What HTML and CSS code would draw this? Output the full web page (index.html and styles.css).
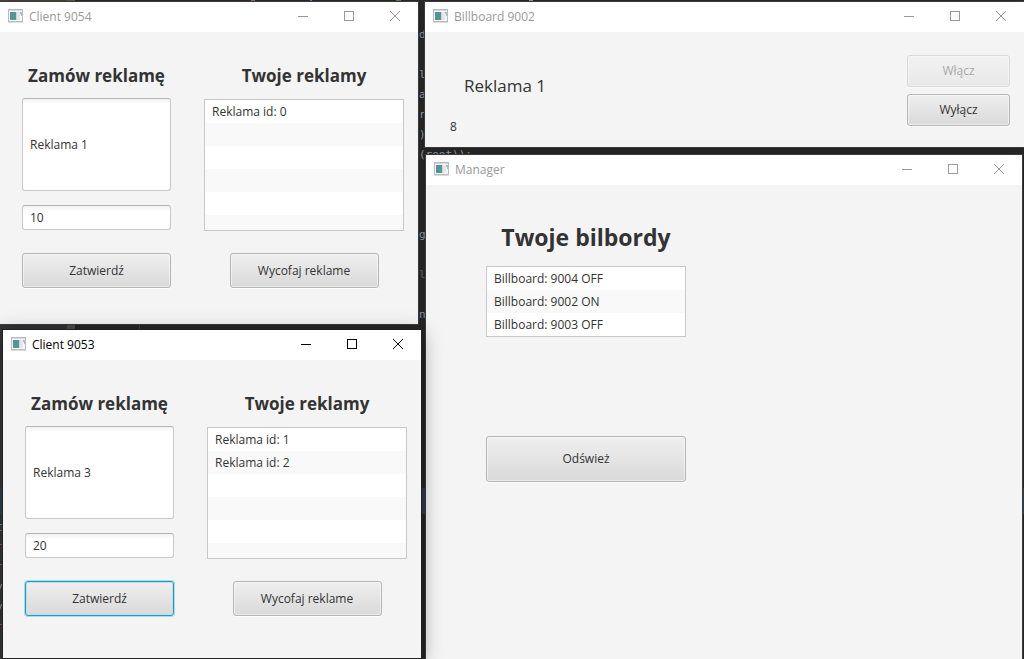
FILE: index.html
```html
<!DOCTYPE html>
<html lang="pl">
<head>
<meta charset="utf-8">
<title>Billboardy</title>
<link rel="stylesheet" href="styles.css">
</head>
<body>
<svg class="defs" width="0" height="0" aria-hidden="true">
  <defs>
    <linearGradient id="pane" x1="0" y1="0" x2="1" y2="1">
      <stop offset="0" stop-color="#5f86b0"/><stop offset="1" stop-color="#45a67a"/>
    </linearGradient>
    <symbol id="app" viewBox="0 0 16 14">
      <rect x="0.5" y="0.5" width="14" height="12" fill="#f8f8fa" stroke="#b8bcc2"/>
      <path d="M0 13.5h15.5" stroke="#dcdcdc"/>
      <path d="M1 1.5h13" stroke="#d5d8e2"/>
      <rect x="2" y="3" width="6" height="8" fill="url(#pane)"/>
      <rect x="8" y="3" width="1" height="8" fill="#cfd6da"/>
      <rect x="9" y="3" width="3" height="8" fill="#e6e6ea"/>
      <path d="M12 3h2v4h-1v-2h-1z" fill="#9cc4bd"/>
    </symbol>
    <symbol id="min" viewBox="0 0 10 10"><path d="M0 5.5h10" stroke="currentColor"/></symbol>
    <symbol id="max" viewBox="0 0 10 10"><rect x="0.5" y="0.5" width="9" height="9" fill="none" stroke="currentColor"/></symbol>
    <symbol id="close" viewBox="0 0 10 10"><path d="M0 0l10 10M10 0l-10 10" stroke="currentColor"/></symbol>
  </defs>
</svg>
<div class="desktop">
  <div class="editor" aria-hidden="true">
    <div class="tabs"></div>
    <div class="gutter"></div>
    <div class="selected-line"></div>
    <pre class="code code-main">d

l
a
r
)
(root))<span class="kw">;</span>



g

<span class="dim">l</span>

n</pre>
    <pre class="code code-side">□
<span class="err">r</span>
<span class="err">r</span>
y
y
<span class="err">r</span></pre>
  </div>

  <section class="window client-a">
    <header class="titlebar">
      <svg class="app-icon"><use href="#app"/></svg>
      <span class="title">Client 9054</span>
      <button class="ctl" aria-label="Minimalizuj"><svg><use href="#min"/></svg></button>
      <button class="ctl" aria-label="Maksymalizuj"><svg><use href="#max"/></svg></button>
      <button class="ctl" aria-label="Zamknij"><svg><use href="#close"/></svg></button>
    </header>
    <div class="client-body">
      <form class="order">
        <h2 class="heading" id="order-a">Zamów reklamę</h2>
        <input class="field message" type="text" value="Reklama 1" aria-labelledby="order-a">
        <input class="field" type="text" value="10" aria-label="Czas">
        <button class="btn" type="button">Zatwierdź</button>
      </form>
      <div class="ads">
        <h2 class="heading">Twoje reklamy</h2>
        <ul class="list list-ads"><li>Reklama id: 0</li></ul>
        <button class="btn" type="button">Wycofaj reklame</button>
      </div>
    </div>
  </section>

  <section class="window billboard">
    <header class="titlebar">
      <svg class="app-icon"><use href="#app"/></svg>
      <span class="title">Billboard 9002</span>
      <button class="ctl" aria-label="Minimalizuj"><svg><use href="#min"/></svg></button>
      <button class="ctl" aria-label="Maksymalizuj"><svg><use href="#max"/></svg></button>
      <button class="ctl" aria-label="Zamknij"><svg><use href="#close"/></svg></button>
    </header>
    <div class="billboard-body">
      <div class="display">
        <p class="advert">Reklama 1</p>
        <p class="counter">8</p>
      </div>
      <div class="switches">
        <button class="btn" type="button" disabled>Włącz</button>
        <button class="btn" type="button">Wyłącz</button>
      </div>
    </div>
  </section>

  <section class="window manager">
    <header class="titlebar">
      <svg class="app-icon"><use href="#app"/></svg>
      <span class="title">Manager</span>
      <button class="ctl" aria-label="Minimalizuj"><svg><use href="#min"/></svg></button>
      <button class="ctl" aria-label="Maksymalizuj"><svg><use href="#max"/></svg></button>
      <button class="ctl" aria-label="Zamknij"><svg><use href="#close"/></svg></button>
    </header>
    <div class="manager-body">
      <h1 class="heading-big">Twoje bilbordy</h1>
      <ul class="list"><li>Billboard: 9004 OFF</li><li>Billboard: 9002 ON</li><li>Billboard: 9003 OFF</li></ul>
      <button class="btn refresh" type="button">Odśwież</button>
    </div>
  </section>

  <section class="window client-b active">
    <header class="titlebar">
      <svg class="app-icon"><use href="#app"/></svg>
      <span class="title">Client 9053</span>
      <button class="ctl" aria-label="Minimalizuj"><svg><use href="#min"/></svg></button>
      <button class="ctl" aria-label="Maksymalizuj"><svg><use href="#max"/></svg></button>
      <button class="ctl" aria-label="Zamknij"><svg><use href="#close"/></svg></button>
    </header>
    <div class="client-body">
      <form class="order">
        <h2 class="heading" id="order-b">Zamów reklamę</h2>
        <input class="field message" type="text" value="Reklama 3" aria-labelledby="order-b">
        <input class="field" type="text" value="20" aria-label="Czas">
        <button class="btn focused" type="button">Zatwierdź</button>
      </form>
      <div class="ads">
        <h2 class="heading">Twoje reklamy</h2>
        <ul class="list list-ads"><li>Reklama id: 1</li><li>Reklama id: 2</li></ul>
        <button class="btn" type="button">Wycofaj reklame</button>
      </div>
    </div>
  </section>
</div>
</body>
</html>
```
FILE: styles.css
```css
* { box-sizing: border-box; }
body {
  margin: 0;
  font: 12px/16px "Open Sans", "Noto Sans", sans-serif;
  color: #333;
}
h1, h2, p, ul, pre { margin: 0; padding: 0; }
button, input { font: inherit; color: inherit; }
.defs { position: absolute; }

.desktop {
  position: relative;
  height: 100vh;
  overflow: hidden;
  background: #292929;
}

/* Editor behind the windows */
.code {
  position: absolute;
  font: 11px/20px "DejaVu Sans Mono", monospace;
  color: #93a0b0;
}
.code-main { left: 419px; top: 25px; }
.code-side { left: -4px; top: 517px; }
.kw { color: #cc7832; }
.dim { color: #666; }
.err { color: #c0504a; }
.tabs, .gutter, .selected-line { position: absolute; }
.tabs {
  top: 0;
  width: 100%;
  height: 2px;
  background: linear-gradient(90deg,
    #4b4636 0 67px, #5c5850 67px 75px, #2b2b2b 75px 251px,
    #8a63a0 251px 255px, #2b2b2b 255px 310px, #4a86b8 310px 312px,
    #2b2b2b 312px 396px, #5c7f4c 396px 401px, #2b2b2b 401px 529px,
    #8a97a6 529px 533px, #2b2b2b 533px);
}
.gutter {
  top: 324px;
  width: 140px;
  height: 100%;
  background: linear-gradient(90deg, #34383a 0 67px, #505254 67px 75px, #292929 75px 139px, #484848 139px);
}
.selected-line {
  top: 488px;
  width: 100%;
  height: 26px;
  background: #344250;
}

/* Windows */
.window {
  position: absolute;
  display: flex;
  flex-direction: column;
  background: #f4f4f4;
  box-shadow: 0 0 0 1px #3a3a3a, 0 2px 10px rgba(0, 0, 0, 0.2);
}
.window.active { box-shadow: 0 0 0 1px #222, 0 4px 20px rgba(0, 0, 0, 0.4); }
.client-a { left: 0; top: 2px; width: 418px; height: 322px; }
.client-b { left: 3px; top: 330px; width: 418px; height: 328px; }
.billboard { left: 425px; right: 0; top: 2px; height: 145px; }
.manager { left: 426px; right: 2px; top: 155px; bottom: -20px; }

.titlebar {
  display: flex;
  align-items: center;
  flex: none;
  height: 30px;
  padding-left: 8px;
  background: #fff;
  color: #999;
}
.active .titlebar { color: #000; }
.app-icon { width: 16px; height: 14px; margin: 0 5px 2px 0; }
.title { flex: 1; }
.ctl {
  display: grid;
  place-items: center;
  align-self: flex-start;
  width: 46px;
  height: 28px;
  padding: 0;
  border: 0;
  background: none;
}
.ctl svg { width: 10px; height: 10px; }

/* Controls */
.btn {
  width: 149px;
  height: 35px;
  padding: 0;
  border: 1px solid #b5b5b5;
  border-radius: 3px;
  background: linear-gradient(#efefef, #d9d9d9);
  box-shadow: inset 0 0 0 1px rgba(255, 255, 255, 0.5), 0 1px 0 #fcfcfc;
}
.btn:disabled { opacity: 0.4; }
.btn.focused {
  border-color: #1a9ccb;
  box-shadow: 0 0 0 1px #a5dcee, inset 0 0 0 1px #c3dde6;
}
.field {
  width: 100%;
  height: 25px;
  padding: 0 7px;
  border: 1px solid #c8c8c8;
  border-top-color: #b5b5b5;
  border-radius: 3px;
  background: linear-gradient(#f2f2f2, #fff 5px);
}
.list {
  width: 200px;
  border: 1px solid #c8c8c8;
  list-style: none;
  background: repeating-linear-gradient(#fff 0 23px, #f9f9f9 23px 46px);
}
.list li { height: 23px; padding: 0 7px; line-height: 24px; }
.list-ads { height: 132px; }

/* Client */
.client-body {
  display: flex;
  gap: 33px;
  padding: 32px 14px 0 22px;
}
.order, .ads { display: flex; flex-direction: column; align-items: center; }
.order { width: 149px; }
.ads { width: 200px; }
.heading { font-size: 17px; line-height: 24px; white-space: nowrap; }
.order .heading { margin-bottom: 10px; }
.ads .heading { margin-bottom: 11px; }
.message { height: 93px; margin-bottom: 14px; }
.order .btn { margin-top: 23px; }
.ads .btn { margin-top: 22px; }

/* Billboard */
.billboard-body {
  display: flex;
  justify-content: space-between;
  padding: 23px 14px 0 25px;
}
.display { padding-top: 19px; }
.advert { padding-left: 14px; font-size: 17px; line-height: 24px; }
.counter { margin-top: 21px; }
.switches { display: flex; flex-direction: column; gap: 7px; }
.switches .btn { width: 103px; height: 32px; }

/* Manager */
.manager-body {
  display: flex;
  flex-direction: column;
  align-items: center;
  width: 200px;
  margin: 36px 0 0 60px;
}
.heading-big { margin-bottom: 13px; font-size: 23px; line-height: 32px; white-space: nowrap; }
.refresh { width: 100%; height: 46px; margin-top: 99px; }
```
